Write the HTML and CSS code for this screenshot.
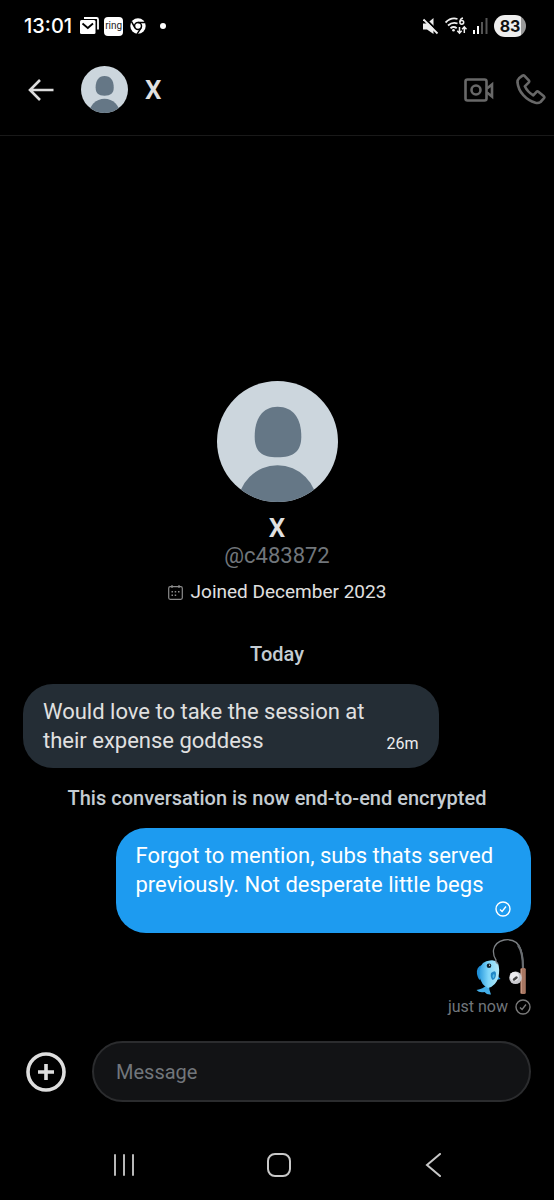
FILE: index.html
```html
<!DOCTYPE html>
<html lang="en">
<head>
  <meta charset="UTF-8" />
  <meta name="viewport" content="width=device-width, initial-scale=1.0"/>
  <title>X</title>
  <link rel="stylesheet" href="styles.css">
</head>
<body>
  <div class="status-bar">
    <span class="clock">13:01</span>
    <svg class="mail" width="19" height="18" viewBox="0 0 19 18">
      <path d="M4 1h12.500q1.500 0 1.500 1.500v10" fill="none" stroke="#fff" stroke-width="1.800"/>
      <rect x="0" y="3" width="15.500" height="14" rx="1.500" fill="#fff"/>
      <path d="M2.500 6.500L7.800 11l5.200-4.500" fill="none" stroke="#000" stroke-width="1.800"/>
    </svg>
    <span class="ring">ring</span>
    <svg class="chrome" width="16" height="16" viewBox="0 0 16 16">
      <circle cx="8" cy="8" r="7.700" fill="#fff"/>
      <circle cx="8" cy="8" r="3.500" fill="none" stroke="#000" stroke-width="1.500"/>
      <path d="M8 4.400h7.500M5 9.900L1.500 3.700M11.100 9.900L7.200 15.800" stroke="#000" stroke-width="1.500"/>
    </svg>
    <span class="dot"></span>
    <div class="status-right">
      <svg width="16" height="17" viewBox="0 0 16 17">
        <path d="M0 5.500h4L10.500 0v16L4 11.500H0z" fill="#eee"/>
        <path d="M1.500 0L16 14.500" stroke="#000" stroke-width="2"/>
        <path d="M.5 1.500L14.500 15.500" stroke="#eee" stroke-width="1.800"/>
      </svg>
      <svg width="22" height="18" viewBox="0 0 22 18" fill="none" stroke="#eee" stroke-width="1.800">
        <path d="M.6 5.500Q6 0 12.500 2M3 8.500Q7.500 4.500 12.500 6.500M5.500 11.300q3.200-2.500 6.200 0"/>
        <circle cx="8.500" cy="13.300" r="1.300" fill="#eee" stroke="none"/>
        <path d="M18 1q-3 .5-3 4" stroke-width="1.500"/>
        <circle cx="16.800" cy="5.300" r="1.900" stroke-width="1.500"/>
        <path d="M14.500 10v6M12.300 13.800l2.200 2.400 2.200-2.400M19.300 16v-6M17.100 12.200l2.200-2.400 2.200 2.400" stroke-width="1.500"/>
      </svg>
      <svg width="15" height="16" viewBox="0 0 15 16">
        <path d="M0 12h2v4H0zM4 8h2v8H4z" fill="#fff"/>
        <path d="M8 4h2v12H8zM12.500 0h2v16h-2z" fill="#555"/>
      </svg>
      <span class="battery">83</span>
    </div>
  </div>

  <header class="app-bar">
    <button class="back" aria-label="Back">
      <svg width="26" height="22" viewBox="0 0 26 22" fill="none" stroke="#dcdcdc" stroke-width="2.600">
        <path d="M12 1L2 11l10 10M2 11h23.500"/>
      </svg>
    </button>
    <svg class="avatar-small" viewBox="0 0 122 122">
      <use href="#person"/>
    </svg>
    <h1>X</h1>
    <div class="calls">
      <button aria-label="Video call">
        <svg width="30" height="24" viewBox="0 0 30 24" fill="none" stroke="#686868" stroke-width="2.600">
          <rect x="1.500" y="1.500" width="21" height="21" rx="2"/>
          <circle cx="12" cy="12" r="4.500"/>
          <path d="M23 10.500l5-4v12l-5-4"/>
        </svg>
      </button>
      <button aria-label="Call">
        <svg width="30" height="31" viewBox="0 0 30 31" fill="none" stroke="#686868" stroke-width="2.600" stroke-linejoin="round">
          <path d="M8.500 1.800L12.800 6.300Q13.600 7.200 12.800 8.300L8.800 12.300Q11.500 18 17.300 21.300L20.500 17.800Q21.400 17.100 22.400 17.800L27.900 22.300Q28.800 23.200 28 24.200L24.500 28Q22.500 29.500 19.500 28.800C10 26 2.500 18 1.500 8.500Q1.300 6 3 4.300L6.500 1.600Q7.500 1 8.500 1.800Z"/>
        </svg>
      </button>
    </div>
  </header>

  <main class="chat">
    <section class="profile">
      <svg class="avatar" viewBox="0 0 122 122">
        <defs>
          <clipPath id="round"><circle cx="61" cy="61" r="61"/></clipPath>
        </defs>
        <g id="person" clip-path="url(#round)">
          <rect width="122" height="122" fill="#ccd6dd"/>
          <path d="M61 26C77 26 85 38 85 56C85 71 77 77 61 77S38 71 38 56C38 38 46 26 61 26Z" fill="#657786"/>
          <circle cx="61" cy="125" r="40" fill="#657786"/>
        </g>
      </svg>
      <h2>X</h2>
      <p class="handle">@c483872</p>
      <p class="joined">
        <svg width="15" height="15" viewBox="0 0 15 15" fill="none" stroke="#8b8b8b">
          <rect x=".7" y="1.700" width="13.600" height="12.600" rx="1.500" stroke-width="1.200"/>
          <path d="M4 0v3M11 0v3" stroke-width="1.200"/>
          <path d="M3.500 6.800h1.500M6.700 6.800h1.500M10 6.800h1.500M3.500 10.300h1.500M6.700 10.300h1.500" stroke-width="1.600"/>
        </svg>
        Joined December 2023
      </p>
    </section>

    <p class="notice today">Today</p>
    <div class="bubble received">
      <p>Would love to take the session at their expense goddess</p>
      <time>26m</time>
    </div>
    <p class="notice">This conversation is now end-to-end encrypted</p>
    <div class="bubble sent">
      <p>Forgot to mention, subs thats served previously. Not desperate little begs</p>
      <svg class="check" viewBox="0 0 16 16" fill="none" stroke="#fff" stroke-width="1.400">
        <circle cx="8" cy="8" r="7"/>
        <path d="M5 8.400l2.100 2L11 5.500"/>
      </svg>
    </div>

    <svg class="emoji" role="img" aria-label="Fishing pole" width="54" height="57" viewBox="0 0 54 57">
      <defs>
        <linearGradient id="scales" x1="0" y1="0" x2="1" y2="0">
          <stop offset="0" stop-color="#2f9ee0"/>
          <stop offset=".45" stop-color="#7ed6fa"/>
          <stop offset="1" stop-color="#b5e8f5"/>
        </linearGradient>
      </defs>
      <path d="M7 27Q1 29 2 36Q3 41 5 42L9 32Z" fill="#1e8fd8"/>
      <path d="M12 47Q8 51 1.500 52Q4 55 9.500 54Q12 57 16 56.500Q14 52 14 48Z" fill="#43aee8"/>
      <path d="M22 37l3.500 4-4 1z" fill="#2c9be0"/>
      <path d="M15 22.500Q20 21.500 23 25Q25 31 23.500 39Q21 48 13 50Q6 47 4.500 38Q4 29 8 25Q11 22.500 15 22.500Z" fill="url(#scales)"/>
      <path d="M16 35Q21 31 21 36Q21 41 17.500 42Q15 39 16 35Z" fill="#2187c5"/>
      <path d="M18 36.500q2-1 1.500 1.500t-1.500 2q-1-1.500 0-3.500z" fill="#54bce8"/>
      <circle cx="14" cy="27.800" r="2.300" fill="#10202c"/>
      <circle cx="14.600" cy="27.200" r=".6" fill="#fff"/>
      <path d="M23 26Q20.500 25 21 22Q18 18 18.500 12Q20 4 29 2Q42 0 46 12Q48 19 48 30" fill="none" stroke="#7c8084" stroke-width="1.300"/>
      <path d="M43 7Q48 14 48 30" fill="none" stroke="#686c70" stroke-width="2.200"/>
      <rect x="45.300" y="30" width="5.500" height="26" rx="1.500" fill="#a87762"/>
      <path d="M46.500 31v24" stroke="#c59580"/>
      <circle cx="40.500" cy="39.800" r="6.300" fill="#c9c9ce"/>
      <circle cx="39.500" cy="38.500" r="4.500" fill="#ececf0"/>
      <path d="M39 41.500l2.500-2" stroke="#444" stroke-width="2.500" stroke-linecap="round"/>
    </svg>
    <p class="delivered">
      just now
      <svg class="check" viewBox="0 0 16 16" fill="none" stroke="#7a7a7a" stroke-width="1.400">
        <circle cx="8" cy="8" r="7"/>
        <path d="M5 8.400l2.100 2L11 5.500"/>
      </svg>
    </p>
  </main>

  <form class="composer">
    <button type="button" aria-label="Add attachment">
      <svg width="40" height="40" viewBox="0 0 40 40" fill="none" stroke="#dedede">
        <circle cx="20" cy="20" r="18" stroke-width="3.600"/>
        <path d="M20 12v16M12 20h16" stroke-width="3.600"/>
      </svg>
    </button>
    <input type="text" placeholder="Message" aria-label="Message">
  </form>

  <nav class="system-nav">
    <button aria-label="Recent apps">
      <svg width="24" height="24" viewBox="0 0 24 24" stroke="#b8b8b8" stroke-width="2" stroke-linecap="round">
        <path d="M3 2v20M12 2v20M21 2v20"/>
      </svg>
    </button>
    <button aria-label="Home">
      <svg width="24" height="24" viewBox="0 0 24 24" fill="none" stroke="#c8c8c8" stroke-width="2">
        <rect x="1" y="1" width="22" height="22" rx="7"/>
      </svg>
    </button>
    <button aria-label="Back">
      <svg width="24" height="24" viewBox="0 0 24 24" fill="none" stroke="#c8c8c8" stroke-width="2" stroke-linecap="round">
        <path d="M18 1L5 12l13 11"/>
      </svg>
    </button>
  </nav>
</body>
</html>
```

FILE: styles.css
```css
* {
  box-sizing: border-box;
}
body {
  margin: 0;
  min-height: 100vh;
  display: flex;
  flex-direction: column;
  background: #000;
  color: #e0e0e0;
  font-family: Roboto, sans-serif;
}
h1, h2, p {
  margin: 0;
}
button {
  padding: 0;
  border: none;
  background: none;
  cursor: pointer;
}
svg {
  display: block;
  flex-shrink: 0;
}

/* status bar */
.status-bar {
  display: flex;
  align-items: center;
  height: 52px;
  padding: 0 28px 0 24px;
}
.clock {
  margin-right: 8px;
  color: #fff;
  font-family: Inter, sans-serif;
  font-size: 20px;
  font-weight: 500;
}
.ring {
  width: 19px;
  height: 19px;
  margin: 0 7px 0 5px;
  border-radius: 4px;
  background: #fff;
  color: #222;
  font-size: 10px;
  line-height: 17px;
  text-align: center;
}
.dot {
  width: 6px;
  height: 6px;
  margin-left: 14px;
  border-radius: 50%;
  background: #fff;
}
.status-right {
  display: flex;
  align-items: center;
  gap: 6px;
  margin-left: auto;
}
.battery {
  width: 32px;
  border-radius: 11px;
  background: linear-gradient(to right, #eee 83%, #999 83%);
  color: #111;
  font-family: Inter, sans-serif;
  font-size: 16px;
  font-weight: 700;
  line-height: 22px;
  text-align: center;
}

/* app bar */
.app-bar {
  display: flex;
  align-items: center;
  height: 84px;
  padding: 0 8px 8px 28px;
  border-bottom: 1px solid #191919;
}
.avatar-small {
  width: 47px;
  height: 47px;
  margin: 0 17px 0 27px;
}
.app-bar h1 {
  font-size: 26px;
  font-weight: 600;
}
.calls {
  display: flex;
  align-items: center;
  gap: 22px;
  margin-left: auto;
}

/* conversation */
.chat {
  flex: 1;
  display: flex;
  flex-direction: column;
  justify-content: flex-end;
  padding: 24px 23px;
}
.profile {
  display: flex;
  flex-direction: column;
  align-items: center;
}
.avatar {
  width: 121px;
  height: 121px;
  margin-bottom: 12px;
}
.profile h2 {
  font-size: 26px;
  font-weight: 600;
  line-height: 28px;
}
.handle {
  color: #71767b;
  font-size: 22px;
  line-height: 28px;
}
.joined {
  display: flex;
  align-items: center;
  gap: 8px;
  margin-top: 10px;
  font-size: 19px;
  line-height: 24px;
}
.notice {
  margin: 18px 0;
  color: #c4ccd2;
  font-size: 20px;
  font-weight: 500;
  line-height: 24px;
  text-align: center;
}
.today {
  margin-top: 38px;
}
.bubble {
  display: flex;
  max-width: 75vw;
  padding: 13px 20px;
  border-radius: 30px;
  font-size: 22px;
  line-height: 29px;
}
.received {
  align-self: flex-start;
  align-items: flex-end;
  gap: 12px;
  background: #242d35;
}
.received time {
  color: #eee;
  font-size: 16px;
  line-height: 22px;
}
.sent {
  align-self: flex-end;
  flex-direction: column;
  background: #1d9bf0;
  color: #fff;
}
.check {
  width: 16px;
  height: 16px;
}
.sent .check {
  align-self: flex-end;
  margin: 2px 0 3px;
}
.emoji {
  align-self: flex-end;
  margin: 5px 2px 0 0;
}
.delivered {
  display: flex;
  align-items: center;
  justify-content: flex-end;
  gap: 7px;
  margin-top: 2px;
  color: #71767b;
  font-size: 16px;
  line-height: 20px;
}

/* message box */
.composer {
  display: flex;
  align-items: center;
  gap: 26px;
  padding: 0 23px 28px 26px;
}
.composer input {
  flex: 1;
  min-width: 0;
  height: 61px;
  padding: 0 22px;
  border: 2px solid #2b2c2e;
  border-radius: 31px;
  background: #121315;
  color: #e0e0e0;
  font-family: Roboto, sans-serif;
  font-size: 20px;
}
.composer input::placeholder {
  color: #71767b;
}

/* system navigation */
.system-nav {
  display: flex;
  justify-content: space-between;
  align-items: center;
  height: 70px;
  padding: 0 108px 0 112px;
}
```
